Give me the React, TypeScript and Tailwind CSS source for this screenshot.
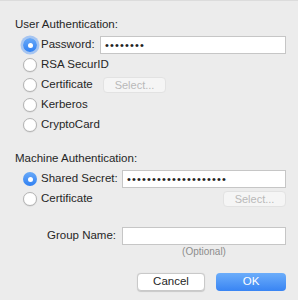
function Radio({ checked, focus }: { checked?: boolean; focus?: boolean }) {
  if (checked) {
    return (
      <span
        className={
          focus
            ? 'flex size-[14px] shrink-0 items-center justify-center rounded-full bg-gradient-to-b from-[#68a9f8] to-[#2f80f2] shadow-[0_0_0_2.5px_rgba(110,165,245,0.55)]'
            : 'flex size-[14px] shrink-0 items-center justify-center rounded-full bg-gradient-to-b from-[#68a9f8] to-[#2f80f2]'
        }
      >
        <span className="size-[5px] rounded-full bg-white" />
      </span>
    );
  }
  return <span className="size-[14px] shrink-0 rounded-full border border-[#b4b4b4] bg-white shadow-[0_0.5px_1px_rgba(0,0,0,0.12)]" />;
}

function Field({ dots }: { dots?: number }) {
  return (
    <div className="flex h-[18px] flex-1 items-center border border-[#c6c6c6] bg-white pl-[4px] text-[11px] leading-none tracking-[1.15px] text-[#222]">
      {dots ? '•'.repeat(dots) : ''}
    </div>
  );
}

function SelectButton() {
  return (
    <div className="flex h-[16px] w-[63px] items-center justify-center rounded-[4px] border border-[#e2e2e2] bg-[#f5f5f5] text-[11px] text-[#b9b9b9]">
      Select...
    </div>
  );
}

function Row({ children }: { children: React.ReactNode }) {
  return <div className="flex h-[20px] items-center">{children}</div>;
}

export default function App() {
  return (
    <div className="h-[300px] w-[298px] border-t border-[#dcdcdc] bg-[#ececec] pl-[15px] pr-[12px] pt-[16px] font-['Liberation_Sans',Arial,sans-serif] text-[11.5px] text-[#262626]">
      <div className="leading-[14px]">User Authentication:</div>
      <div className="mt-[4px] pl-[8px]">
        <Row>
          <Radio checked focus />
          <span className="ml-[4px] w-[59px]">Password:</span>
          <Field dots={8} />
        </Row>
        <Row>
          <Radio />
          <span className="ml-[4px]">RSA SecurID</span>
        </Row>
        <Row>
          <Radio />
          <span className="ml-[4px] w-[62px]">Certificate</span>
          <SelectButton />
        </Row>
        <Row>
          <Radio />
          <span className="ml-[4px]">Kerberos</span>
        </Row>
        <Row>
          <Radio />
          <span className="ml-[4px]">CryptoCard</span>
        </Row>
      </div>

      <div className="mt-[16px] leading-[14px]">Machine Authentication:</div>
      <div className="mt-[4px] pl-[8px]">
        <Row>
          <Radio checked />
          <span className="ml-[4px] w-[81px]">Shared Secret:</span>
          <Field dots={20} />
        </Row>
        <Row>
          <Radio />
          <span className="ml-[4px]">Certificate</span>
          <div className="ml-auto">
            <SelectButton />
          </div>
        </Row>
      </div>

      <div className="mt-[18px] flex h-[18px] items-center">
        <span className="w-[101px] text-right">Group Name:</span>
        <div className="ml-[6px] flex flex-1">
          <Field />
        </div>
      </div>
      <div className="mt-[1px] flex">
        <div className="w-[107px]" />
        <div className="flex-1 text-center text-[10px] leading-[12px] text-[#8c8c8c]">(Optional)</div>
      </div>

      <div className="mt-[15px] flex justify-end gap-[11px] pr-[-1px]">
        <div className="flex h-[18px] w-[68px] items-center justify-center rounded-[4px] border border-[#c9c9c9] bg-white shadow-[0_0.5px_1px_rgba(0,0,0,0.15)]">
          Cancel
        </div>
        <div className="flex h-[18px] w-[70px] items-center justify-center rounded-[4px] bg-gradient-to-b from-[#6cadfa] to-[#3884f3] text-white">
          OK
        </div>
      </div>
    </div>
  );
}
